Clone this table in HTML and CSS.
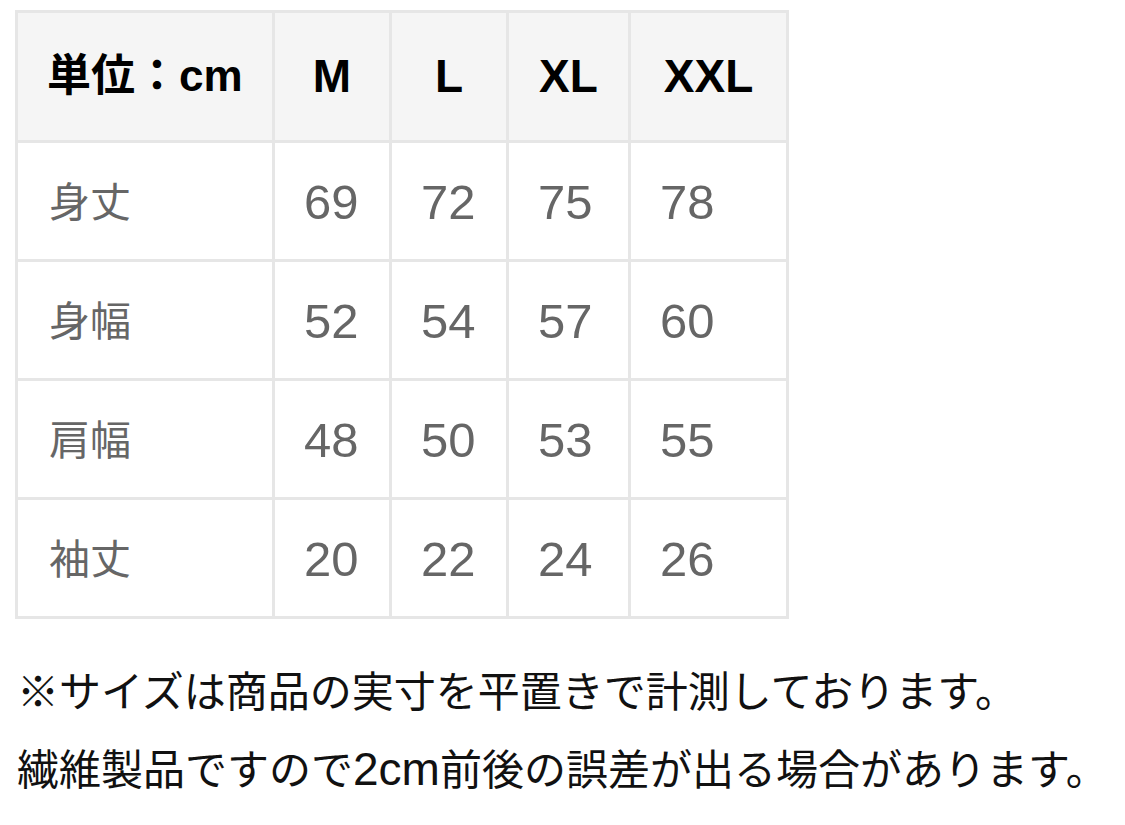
FILE: index.html
```html
<!DOCTYPE html>
<html lang="ja">
<head>
<meta charset="utf-8">
<title>サイズ表</title>
<link rel="stylesheet" href="styles.css">
</head>
<body>
<div class="page">
  <table class="size-table">
    <colgroup>
      <col class="c-label">
      <col class="c-m">
      <col class="c-l">
      <col class="c-xl">
      <col class="c-xxl">
    </colgroup>
    <thead>
      <tr>
        <th class="label">単位：cm</th>
        <th>M</th>
        <th>L</th>
        <th>XL</th>
        <th>XXL</th>
      </tr>
    </thead>
    <tbody>
      <tr><td class="label">身丈</td><td>69</td><td>72</td><td>75</td><td>78</td></tr>
      <tr><td class="label">身幅</td><td>52</td><td>54</td><td>57</td><td>60</td></tr>
      <tr><td class="label">肩幅</td><td>48</td><td>50</td><td>53</td><td>55</td></tr>
      <tr><td class="label">袖丈</td><td>20</td><td>22</td><td>24</td><td>26</td></tr>
    </tbody>
  </table>
  <div class="notes">
    <p>※サイズは商品の実寸を平置きで計測しております。</p>
    <p>繊維製品ですので<span class="latin">2cm</span>前後の誤差が出る場合があります。</p>
  </div>
</div>
</body>
</html>
```

FILE: styles.css
```css
html, body {
  margin: 0;
  padding: 0;
  background: #ffffff;
}

body {
  font-family: "Liberation Sans", "Noto Sans CJK JP", sans-serif;
  color: #111111;
}

.page {
  padding: 10px 0 0 15px;
}

.size-table {
  border-collapse: collapse;
  table-layout: fixed;
  width: 774px;
  font-size: 49px;
  line-height: 1.2;
}

.c-label { width: 257px; }
.c-m { width: 117px; }
.c-l { width: 117px; }
.c-xl { width: 122px; }
.c-xxl { width: 158px; }

.size-table th,
.size-table td {
  border: 3px solid #e6e6e6;
  padding: 0 29px;
  white-space: nowrap;
  vertical-align: middle;
}

.size-table th {
  height: 127px;
  background: #f5f5f5;
  font-weight: bold;
  font-size: 46px;
  color: #000000;
  text-align: center;
}

.size-table th.label {
  text-align: left;
  font-size: 44px;
  padding-left: 29px;
}

.size-table td {
  height: 114px;
  padding-top: 2px;
  color: #666666;
  text-align: left;
}

.size-table td.label {
  font-size: 41px;
  height: 110px;
  padding-top: 6px;
  padding-left: 31px;
}

.notes {
  margin-top: 36px;
  padding-left: 2px;
  font-size: 42px;
  line-height: 76px;
  color: #111111;
}

.notes p {
  margin: 0;
  white-space: nowrap;
}

.notes .latin {
  font-size: 46px;
}
```
